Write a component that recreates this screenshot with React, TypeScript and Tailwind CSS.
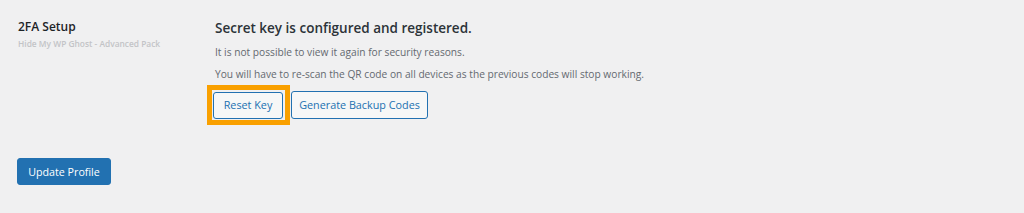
export default function App() {
  return (
    <div
      className="h-[213px] w-[1024px] bg-[#f0f0f1] text-[#3c434a]"
      style={{ fontFamily: '"Open Sans", "Noto Sans", sans-serif' }}
    >
      <div className="flex pl-[18px] pt-[19px]">
        <div className="w-[197px] shrink-0">
          <p className="text-[12px] font-semibold leading-[16px] text-[#1d2327]">2FA Setup</p>
          <p className="mt-[4px] text-[8.4px] font-semibold leading-[10px] text-[#c3c4c7]">
            Hide My WP Ghost - Advanced Pack
          </p>
        </div>
        <div>
          <h3 className="text-[13.5px] font-semibold leading-[18px] text-[#2c3338]">
            Secret key is configured and registered.
          </h3>
          <p className="mt-[8px] text-[10.2px] leading-[14px] text-[#646970]">
            It is not possible to view it again for security reasons.
          </p>
          <p className="mt-[8px] text-[10.2px] leading-[14px] text-[#646970]">
            You will have to re-scan the QR code on all devices as the previous codes will stop working.
          </p>
          <div className="-ml-[8px] mt-[4px] flex items-center">
            <div className="border-[5px] border-[#f9a000] p-[1px] pr-[2px]">
              <button className="h-[27px] w-[70px] rounded-[3px] border border-[#2271b1] bg-[#f6f7f7] text-[10.8px] text-[#2271b1]">
                Reset Key
              </button>
            </div>
            <button className="ml-[1px] h-[28px] w-[137px] rounded-[3px] border border-[#2271b1] bg-[#f6f7f7] text-[10.8px] text-[#2271b1]">
              Generate Backup Codes
            </button>
          </div>
        </div>
      </div>
      <div className="mt-[33px] pl-[17px]">
        <button className="h-[27px] w-[94px] rounded-[3px] border border-[#2271b1] bg-[#2271b1] text-[10.7px] text-white">
          Update Profile
        </button>
      </div>
    </div>
  );
}
